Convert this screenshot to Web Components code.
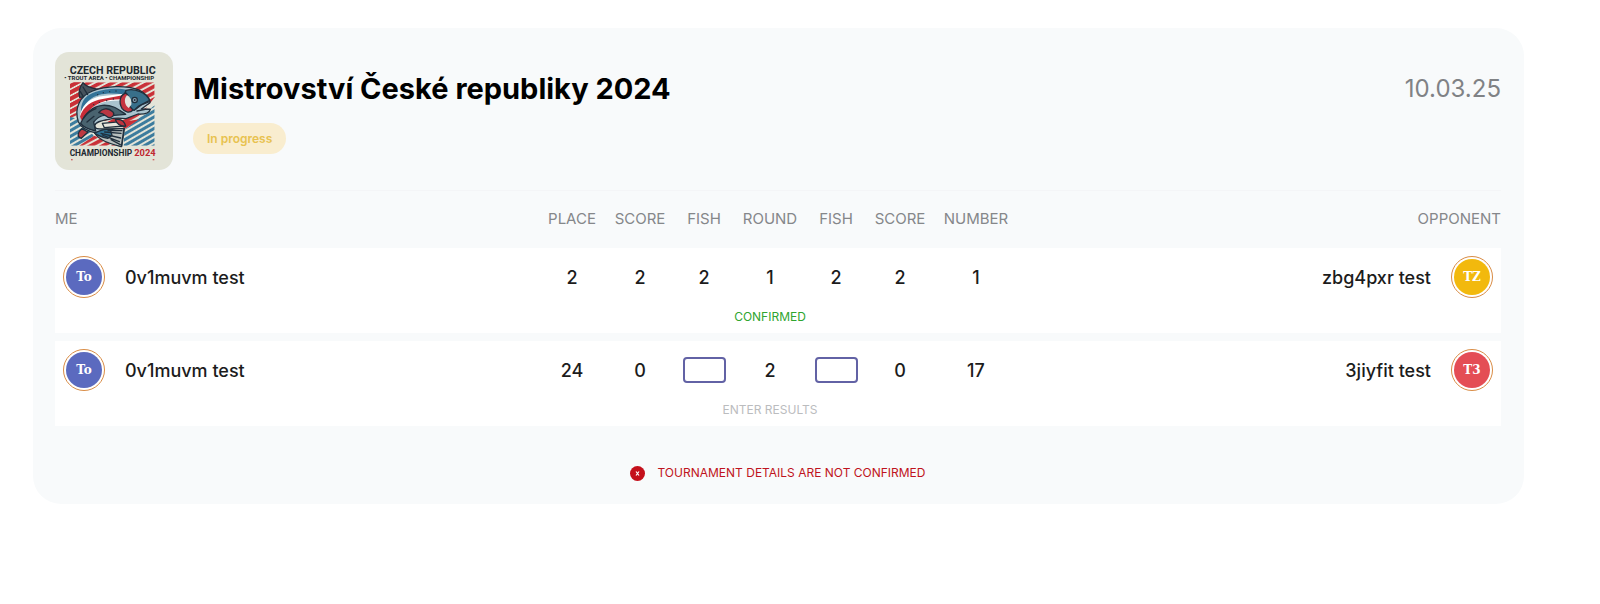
<!DOCTYPE html>
<html lang="en">
<head>
    <meta charset="utf-8">
    <meta name="viewport" content="width=device-width, initial-scale=1">
    <title>Mistrovství České republiky 2024</title>
    <style>
        body {
            margin: 0;
            padding: 28px 76px 28px 33px;
            background: #fff;
            font-family: Inter, "Liberation Sans", sans-serif;
            color: #1c1c1c;
        }
    </style>
</head>
<body>
    <tournament-card>
        <tournament-logo slot="logo"></tournament-logo>
        <span slot="title">Mistrovství České republiky 2024</span>
        <status-pill slot="status">In progress</status-pill>
        <time slot="date" datetime="2025-03-10">10.03.25</time>
        <match-table></match-table>
        <warning-note slot="footer">TOURNAMENT DETAILS ARE NOT CONFIRMED</warning-note>
    </tournament-card>

    <script>
        class TournamentCard extends HTMLElement {
            constructor() {
                super();

                const template = `
                    <style>
                        :host {
                            display: block;
                            padding: 24px 23px 20px 22px;
                            border-radius: 28px;
                            background: #f8fafb;
                        }

                        header {
                            display: flex;
                            gap: 20px;
                            padding-bottom: 20px;
                            border-bottom: 1px solid #f4f5f7;
                        }

                        .heading {
                            flex: 1;
                            padding-top: 17px;
                        }

                        h1 {
                            margin: 0 0 14px;
                            font-size: 29px;
                            font-weight: 700;
                            line-height: 40px;
                            color: #000;
                        }

                        .date {
                            padding-top: 17px;
                            font-size: 24px;
                            line-height: 40px;
                            color: #808285;
                        }

                        footer {
                            display: flex;
                            justify-content: center;
                            padding-top: 36px;
                        }
                    </style>

                    <header>
                        <slot name="logo"></slot>
                        <div class="heading">
                            <h1><slot name="title"></slot></h1>
                            <slot name="status"></slot>
                        </div>
                        <div class="date"><slot name="date"></slot></div>
                    </header>
                    <slot></slot>
                    <footer><slot name="footer"></slot></footer>
                `;

                this.attachShadow({ mode: 'open' }).innerHTML = template;
            }
        }

        class TournamentLogo extends HTMLElement {
            constructor() {
                super();

                const template = `
                    <style>
                        :host {
                            display: block;
                            flex: none;
                            width: 118px;
                            height: 118px;
                            border-radius: 14px;
                            overflow: hidden;
                            background: #e3e4d8;
                        }

                        svg {
                            display: block;
                            width: 100%;
                            height: 100%;
                        }

                        text {
                            font-family: Roboto, "Liberation Sans", sans-serif;
                            font-weight: 700;
                            fill: #20282f;
                        }
                    </style>

                    <svg viewBox="32 36 354 354">
                        <defs>
                            <clipPath id="frame"><rect x="77" y="127" width="254" height="190"/></clipPath>
                            <pattern id="red" width="40" height="17" patternUnits="userSpaceOnUse" patternTransform="rotate(-28)">
                                <rect width="40" height="11" fill="#c93037"/>
                            </pattern>
                            <pattern id="blue" width="40" height="15" patternUnits="userSpaceOnUse" patternTransform="rotate(-30)">
                                <rect width="40" height="9" fill="#3c7c9e"/>
                            </pattern>
                        </defs>
                        <text x="76" y="101" font-size="32">CZECH REPUBLIC</text>
                        <text x="60" y="121" font-size="18">• TROUT  AREA • CHAMPIONSHIP</text>
                        <g clip-path="url(#frame)">
                            <path fill="url(#red)" d="M77 127H331V172L240 290H77Z"/>
                            <path fill="url(#red)" d="M77 127H110L98 215L77 235Z"/>
                            <path fill="#e3e4d8" d="M238 262L331 192V317H77V235L110 220Z"/>
                            <path fill="url(#blue)" d="M240 270L331 196V317H238Z"/>
                            <path fill="url(#blue)" d="M77 230L112 240L150 290L100 317H77Z"/>
                            <path fill="url(#red)" d="M105 317L150 287L215 317Z"/>
                            <path fill="#c93037" d="M240 245L284 238L236 271Z"/>
                        </g>
                        <g stroke="#202f3c" stroke-width="4" stroke-linejoin="round" stroke-linecap="round">
                            <path fill="#47535d" d="M106 172C101 153 108 139 116 128C123 140 143 145 162 148L130 170Z"/>
                            <path fill="#a9c3ce" d="M102 245C89 205 106 168 145 153C184 137 247 136 281 149C302 157 317 174 317 188L291 207L318 208C315 219 299 223 281 222L245 236C219 233 207 234 194 238C168 242 153 246 151 257C151 268 164 267 180 267L240 266L232 319C196 309 176 300 157 279C127 273 108 260 102 245Z"/>
                            <path fill="#327398" stroke="none" d="M110 211C110 181 127 163 155 155C187 146 221 143 251 151L237 163C193 157 157 161 135 180C119 193 111 210 110 230Z"/>
                            <path fill="#fff" stroke="none" d="M108 222C116 190 143 171 177 168L238 161L237 182C177 179 144 193 126 227L112 249Z"/>
                            <path fill="#c82d38" stroke="none" d="M107 230C116 200 143 181 175 177L235 166V178C186 177 150 190 130 218L113 244Z"/>
                            <path fill="#49636f" d="M109 250C123 219 146 199 174 196C206 194 220 207 244 223L210 226C181 221 163 226 148 246L154 273C134 268 116 262 109 250Z"/>
                            <path fill="#b93742" d="M163 218C174 204 191 202 205 215C213 224 205 233 193 233C184 227 177 220 163 218Z"/>
                            <path fill="#be3941" d="M112 266L131 276L111 295C95 290 102 275 112 266Z"/>
                            <path fill="#b9c0be" d="M151 279C179 270 207 266 239 265L231 320C198 311 166 303 151 279Z"/>
                            <path fill="#2f7294" d="M151 279C172 270 182 266 198 269L203 286L190 295C171 291 159 287 151 279Z"/>
                            <path fill="#e8e7de" d="M174 250L230 245L241 258L180 263Z"/>
                            <path fill="#bd343f" d="M213 239C226 236 239 241 244 258C232 259 219 254 213 239Z"/>
                            <path fill="#386f8a" d="M245 151C270 144 304 156 316 181L283 198L270 211L245 204C234 184 238 165 245 151Z"/>
                            <path fill="#c43440" d="M245 159C227 164 222 186 233 205C242 218 257 220 266 210C250 195 247 178 251 166Z"/>
                            <path fill="#e3e5df" stroke="none" d="M248 166C256 170 263 179 261 194L253 204C241 196 237 178 248 166Z"/>
                            <path fill="none" d="M275 207L291 195L317 184M278 213L303 208L317 208M174 285L225 305M170 280L229 294M181 276L230 280M191 272L233 272M200 299L228 314M116 141L130 164M108 155L117 170M117 235C128 220 140 211 155 206M128 246L149 229"/>
                            <circle cx="271" cy="180" r="8" fill="#8fa9bb"/>
                            <circle cx="271" cy="180" r="3" fill="#202f3c" stroke="none"/>
                        </g>
                        <g fill="#202f3c">
                            <circle cx="160" cy="164" r="2"/><circle cx="177" cy="158" r="2"/><circle cx="196" cy="155" r="2"/>
                            <circle cx="215" cy="153" r="2"/><circle cx="148" cy="194" r="2"/><circle cx="165" cy="187" r="2"/>
                            <circle cx="187" cy="182" r="2"/><circle cx="207" cy="177" r="2"/>
                        </g>
                        <text x="76" y="348" font-size="25">CHAMPIONSHIP</text>
                        <text x="334" y="348" font-size="28" text-anchor="end" style="fill: #bf2731">2024</text>
                        <path fill="#c93037" d="M80 358h5v3h-5zM325 358h5v3h-5z"/>
                    </svg>
                `;

                this.attachShadow({ mode: 'open' }).innerHTML = template;
            }
        }

        class StatusPill extends HTMLElement {
            constructor() {
                super();

                const template = `
                    <style>
                        :host {
                            display: inline-block;
                            padding: 0 14px;
                            border-radius: 16px;
                            background: #f9edcf;
                            font-size: 12px;
                            font-weight: 600;
                            line-height: 31px;
                            color: #e8c250;
                        }
                    </style>

                    <slot></slot>
                `;

                this.attachShadow({ mode: 'open' }).innerHTML = template;
            }
        }

        class UserAvatar extends HTMLElement {
            constructor() {
                super();

                const template = `
                    <style>
                        :host {
                            display: block;
                            box-sizing: border-box;
                            flex: none;
                            width: 42px;
                            height: 42px;
                            padding: 2px;
                            border: 1px solid #d98c45;
                            border-radius: 50%;
                        }

                        div {
                            border-radius: 50%;
                            background: var(--avatar-color, #5b6abf);
                            font-family: "DejaVu Serif", serif;
                            font-size: 12px;
                            font-weight: 700;
                            line-height: 36px;
                            text-align: center;
                            color: #fff;
                        }
                    </style>

                    <div><slot></slot></div>
                `;

                this.attachShadow({ mode: 'open' }).innerHTML = template;
            }
        }

        class WarningNote extends HTMLElement {
            constructor() {
                super();

                const template = `
                    <style>
                        :host {
                            display: flex;
                            align-items: center;
                            gap: 12px;
                            font-size: 12px;
                            line-height: 22px;
                            color: #bf1320;
                        }

                        svg {
                            width: 15px;
                            height: 15px;
                        }
                    </style>

                    <svg viewBox="0 0 15 15" aria-hidden="true">
                        <circle cx="7.5" cy="7.5" r="7.5" fill="#c4101b"/>
                        <path d="M6 5.5l3 4M9 5.5l-3 4" stroke="#fff" stroke-width="1.2"/>
                    </svg>
                    <slot></slot>
                `;

                this.attachShadow({ mode: 'open' }).innerHTML = template;
            }
        }

        class MatchTable extends HTMLElement {
            constructor() {
                super();

                const matches = [
                    {
                        me: '0v1muvm test', meInitials: 'To',
                        place: 2, score: 2, fish: 2, round: 1,
                        opponentFish: 2, opponentScore: 2, number: 1,
                        opponent: 'zbg4pxr test', opponentInitials: 'TZ', color: '#f2b90d',
                        confirmed: true
                    },
                    {
                        me: '0v1muvm test', meInitials: 'To',
                        place: 24, score: 0, fish: null, round: 2,
                        opponentFish: null, opponentScore: 0, number: 17,
                        opponent: '3jiyfit test', opponentInitials: 'T3', color: '#e44d55',
                        confirmed: false
                    }
                ];

                const fish = (value, label) => value === null
                    ? `<input type="text" inputmode="numeric" aria-label="${label}">`
                    : value;

                const rows = matches.map((match) => `
                    <tbody>
                        <tr class="result">
                            <td>
                                <div class="player">
                                    <user-avatar>${match.meInitials}</user-avatar>
                                    <span>${match.me}</span>
                                </div>
                            </td>
                            <td>${match.place}</td>
                            <td>${match.score}</td>
                            <td>${fish(match.fish, 'My fish')}</td>
                            <td>${match.round}</td>
                            <td>${fish(match.opponentFish, 'Opponent fish')}</td>
                            <td>${match.opponentScore}</td>
                            <td>${match.number}</td>
                            <td>
                                <div class="player opponent">
                                    <span>${match.opponent}</span>
                                    <user-avatar style="--avatar-color: ${match.color}">${match.opponentInitials}</user-avatar>
                                </div>
                            </td>
                        </tr>
                        <tr class="state">
                            <td colspan="3"></td>
                            <td colspan="3">${match.confirmed
                                ? '<span class="confirmed">CONFIRMED</span>'
                                : '<button type="button">ENTER RESULTS</button>'}</td>
                            <td colspan="3"></td>
                        </tr>
                    </tbody>
                `).join('');

                const template = `
                    <style>
                        :host {
                            display: block;
                        }

                        table {
                            width: 100%;
                            table-layout: fixed;
                            border-spacing: 0;
                            text-align: center;
                        }

                        .place { width: 66px; }
                        .score { width: 70px; }
                        .fish { width: 58px; }
                        .round { width: 74px; }
                        .number { width: 82px; }

                        th {
                            padding: 16px 0 17px;
                            font-size: 15px;
                            font-weight: 400;
                            line-height: 24px;
                            color: #85878a;
                        }

                        th:first-child {
                            text-align: left;
                        }

                        th:last-child {
                            text-align: right;
                        }

                        td {
                            padding: 0;
                            background: #fff;
                            background-clip: padding-box;
                        }

                        .result td {
                            padding: 8px 0;
                            border-top: 8px solid transparent;
                            font-size: 18px;
                            font-weight: 500;
                        }

                        tbody:first-of-type .result td {
                            border-top: 0;
                        }

                        .player {
                            display: flex;
                            align-items: center;
                            gap: 20px;
                            padding: 0 8px;
                        }

                        .opponent {
                            justify-content: flex-end;
                        }

                        input {
                            display: block;
                            box-sizing: border-box;
                            width: 43px;
                            height: 26px;
                            margin: 0 auto;
                            border: 2px solid #6262a5;
                            border-radius: 4px;
                            background: #fff;
                            font: inherit;
                            text-align: center;
                        }

                        .state td {
                            height: 22px;
                            padding-bottom: 5px;
                            font-size: 12px;
                            line-height: 22px;
                        }

                        .confirmed {
                            color: #2fa52f;
                        }

                        button {
                            display: block;
                            margin: 0 auto;
                            padding: 0;
                            border: 0;
                            background: none;
                            font: inherit;
                            color: #bbbcbe;
                        }
                    </style>

                    <table>
                        <colgroup>
                            <col>
                            <col class="place">
                            <col class="score">
                            <col class="fish">
                            <col class="round">
                            <col class="fish">
                            <col class="score">
                            <col class="number">
                            <col>
                        </colgroup>
                        <thead>
                            <tr>
                                <th scope="col">ME</th>
                                <th scope="col">PLACE</th>
                                <th scope="col">SCORE</th>
                                <th scope="col">FISH</th>
                                <th scope="col">ROUND</th>
                                <th scope="col">FISH</th>
                                <th scope="col">SCORE</th>
                                <th scope="col">NUMBER</th>
                                <th scope="col">OPPONENT</th>
                            </tr>
                        </thead>
                        ${rows}
                    </table>
                `;

                this.attachShadow({ mode: 'open' }).innerHTML = template;
            }
        }

        customElements.define('user-avatar', UserAvatar);
        customElements.define('status-pill', StatusPill);
        customElements.define('warning-note', WarningNote);
        customElements.define('tournament-logo', TournamentLogo);
        customElements.define('match-table', MatchTable);
        customElements.define('tournament-card', TournamentCard);
    </script>
</body>
</html>
